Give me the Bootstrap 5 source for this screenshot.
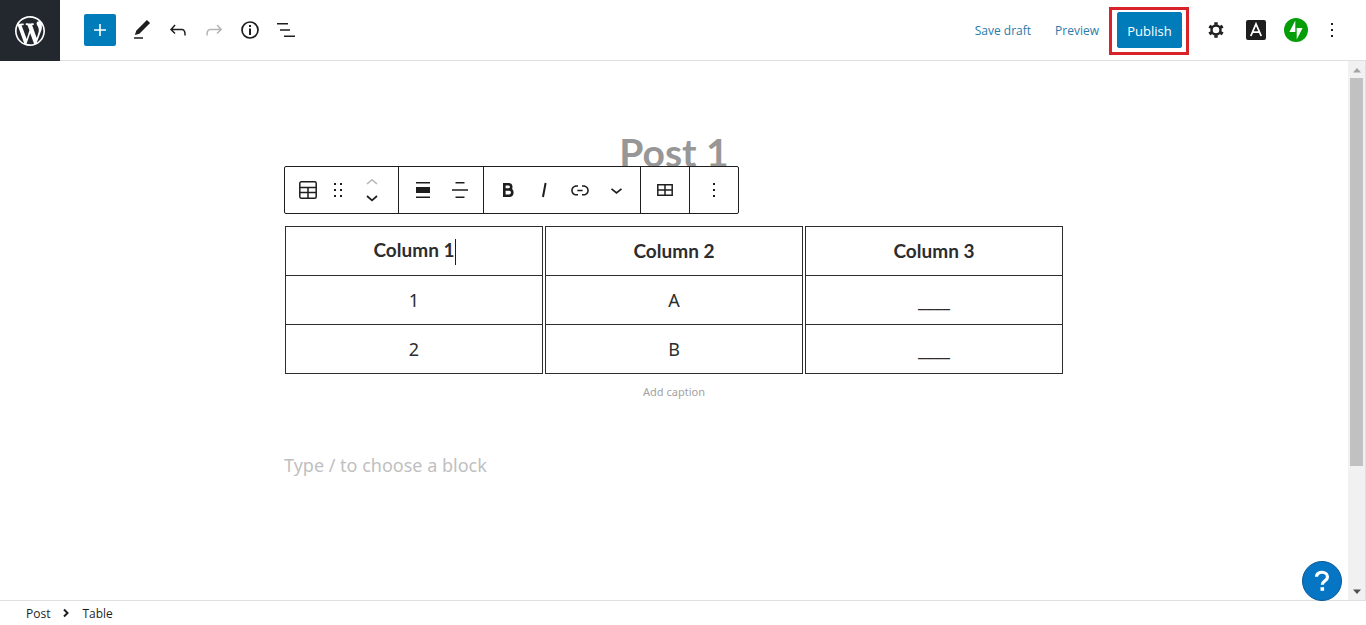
<!DOCTYPE html>
<html lang="en">
<head>
<meta charset="utf-8">
<meta name="viewport" content="width=device-width, initial-scale=1">
<title>Edit Post</title>
<link rel="stylesheet" href="https://cdn.jsdelivr.net/npm/bootstrap@5.3.0/dist/css/bootstrap.min.css">
<style>
  body { font-family: "Open Sans", "Noto Sans", sans-serif; font-size: 12px; color: #1e1e1e; }
  svg { display: block; flex: none; }
  .site-logo { width: 60px; height: 61px; margin-bottom: -1px; background: #23282e; }
  .editor-head { height: 61px; border-bottom: 1px solid #e0e0e0; }
  .icon-btn { width: 36px; height: 36px; padding: 0; border: 0; border-radius: 2px; background: none; color: #1e1e1e; display: flex; align-items: center; justify-content: center; }
  .icon-btn:disabled { color: #b5b5b5; }
  .icon-btn.slim { width: 24px; }
  .inserter { width: 32px; height: 32px; background: #007cba; color: #fff; }
  .text-link { color: #2a7ba8; text-decoration: none; padding-top: 2px; }
  .publish-frame { border: 3px solid #d9232b; padding: 2px 4px 4px 5px; margin: 2px 9px 0 10px; }
  .publish-btn { --bs-btn-bg: #007cba; --bs-btn-border-color: #007cba; --bs-btn-color: #fff; --bs-btn-font-size: 13px; --bs-btn-border-radius: 2px; width: 65px; height: 36px; padding: 3px 0 0; display: block; }
  .canvas { font-family: "Noto Sans", "Open Sans", sans-serif; font-size: 18px; color: #2c2d2e; }
  .column-wide { max-width: 782px; margin: 0 auto; padding-top: 66px; }
  .post-title { font-family: Lato, "Noto Sans", sans-serif; font-size: 39px; line-height: 50px; font-weight: 700; color: #979797; }
  .block-wrap { padding-top: 49px; }
  .block-toolbar { top: -60px; left: 1px; height: 48px; border: 1px solid #1e1e1e; border-radius: 2px; background: #fff; }
  .tool-group { display: flex; align-items: center; border-right: 1px solid #1e1e1e; padding: 0 6px; }
  .tool-group:first-child { padding-left: 5px; }
  .tool-group:last-child { border-right: 0; }
  .mover-pair { margin: 0 8px 0 10px; }
  .mover { width: 24px; height: 16px; }
  .grid-table { width: 100%; table-layout: fixed; border-collapse: separate; border-spacing: 2px 0; text-align: center; }
  .grid-table th, .grid-table td { height: 49px; padding: 0 8px; border: 1px solid #2c2d2e; border-top: 0; line-height: 26px; }
  .grid-table th { height: 50px; border-top: 1px solid #2c2d2e; font-family: Lato, "Noto Sans", sans-serif; font-size: 19px; }
  .caret { display: inline-block; width: 1px; height: 26px; margin-right: -1px; background: #1e1e1e; vertical-align: middle; }
  .plain-input { display: block; width: 100%; border: 0; padding: 0; background: none; outline: 0; }
  .plain-input::placeholder { opacity: 1; }
  .caption-input { height: 20px; margin-top: 7px; font-size: 11px; text-align: center; }
  .caption-input::placeholder { color: #a2a2a2; }
  .para-input { height: 32px; margin-top: 48px; padding-left: 1px; }
  .para-input::placeholder { color: #c0c0c0; }
  .scroll-rail { width: 18px; background: #f1f1f1; border-right: 1px solid #e0e0e0; padding: 0 2px; }
  .scroll-end { height: 17px; display: flex; align-items: center; justify-content: center; }
  .scroll-thumb { flex: 388 0 0; background: #c1c1c1; }
  .scroll-rest { flex: 117 0 0; }
  .help-btn { right: 24px; bottom: -1px; width: 40px; height: 40px; border: 1px solid #0a5a94; border-radius: 50%; background: #0675c4; color: #fff; padding: 0; display: flex; align-items: center; justify-content: center; }
  .editor-foot { height: 25px; border-top: 1px solid #e0e0e0; padding: 2px 0 0 26px; }
</style>
</head>
<body class="vh-100 d-flex flex-column overflow-hidden bg-white">

<header class="editor-head d-flex align-items-center flex-shrink-0">
  <a href="#" class="site-logo d-flex align-items-center justify-content-center align-self-start flex-shrink-0" aria-label="View posts">
    <svg width="36" height="36" viewBox="-2 -2 24 24" fill="#fff"><path d="M20 10c0-5.51-4.49-10-10-10C4.48 0 0 4.49 0 10c0 5.52 4.48 10 10 10 5.51 0 10-4.48 10-10zM7.78 15.37L4.37 6.22c.55-.02 1.17-.08 1.17-.08.5-.06.44-1.13-.06-1.11 0 0-1.45.11-2.37.11-.18 0-.37 0-.58-.01C4.12 2.69 6.87 1.11 10 1.11c2.33 0 4.45.87 6.05 2.34-.68-.11-1.65.39-1.65 1.58 0 .74.45 1.36.9 2.1.35.61.55 1.36.55 2.46 0 1.49-1.4 5-1.4 5l-3.03-8.37c.54-.02.82-.17.82-.17.5-.05.44-1.25-.06-1.22 0 0-1.44.12-2.38.12-.87 0-2.33-.12-2.33-.12-.5-.03-.56 1.2-.06 1.22l.92.08 1.26 3.41zM17.41 10c.24-.64.74-1.87.43-4.25.7 1.29 1.05 2.71 1.05 4.25 0 3.29-1.73 6.24-4.4 7.78.97-2.59 1.94-5.2 2.92-7.78zM6.1 18.09C3.12 16.65 1.11 13.53 1.11 10c0-1.3.23-2.48.72-3.59C3.25 10.3 4.67 14.2 6.1 18.09zm4.03-6.63l2.58 6.98c-.86.29-1.76.45-2.71.45-.79 0-1.57-.11-2.29-.33.81-2.38 1.62-4.74 2.42-7.1z"/></svg>
  </a>
  <div class="d-flex align-items-center ms-4">
    <button class="icon-btn inserter" aria-label="Add block"><svg width="24" height="24" viewBox="0 0 24 24" fill="currentColor"><path d="M18 11.2h-5.2V6h-1.6v5.2H6v1.6h5.2V18h1.6v-5.2H18z"/></svg></button>
    <button class="icon-btn ms-2" aria-label="Tools"><svg width="24" height="24" viewBox="0 0 24 24" fill="currentColor"><path d="M20.1 5.1L16.9 2 6.2 12.7l-1.3 4.4 4.5-1.3L20.1 5.1zM4 19.2h9v1.5H4v-1.5z"/></svg></button>
    <button class="icon-btn" aria-label="Undo"><svg width="24" height="24" viewBox="0 0 24 24" fill="currentColor"><path d="M18.3 11.7c-.6-.6-1.4-.9-2.3-.9H6.7l2.9-3.3-1.1-1-4.5 5L8.500 16l1-1-2.700-2.700H16c.5 0 .9.200 1.300.5 1 1 1 3.400 1 4.500v.3h1.500v-.2c0-1.500 0-4.300-1.500-5.700z"/></svg></button>
    <button class="icon-btn" aria-label="Redo" disabled><svg width="24" height="24" viewBox="0 0 24 24" fill="currentColor"><path d="M15.600 6.500l-1.100 1 2.900 3.300H8c-.9 0-1.700.3-2.300.9-1.400 1.500-1.400 4.200-1.400 5.600v.2h1.500v-.3c0-1.100 0-3.500 1-4.500.3-.3.700-.5 1.300-.5h9.200L14.500 15l1.100 1.100 4.600-4.600-4.600-5z"/></svg></button>
    <button class="icon-btn" aria-label="Details"><svg width="24" height="24" viewBox="0 0 24 24"><circle cx="12" cy="12" r="8" fill="none" stroke="currentColor" stroke-width="1.700"/><path d="M11 7h2v2h-2zM11 10.500h2V17h-2z" fill="currentColor"/></svg></button>
    <button class="icon-btn" aria-label="List view"><svg width="24" height="24" viewBox="0 0 24 24" fill="currentColor"><path d="M3 5h11v1.600H3zM6 11.200h10v1.600H6zM10 17.400h11V19H10z"/></svg></button>
  </div>
  <div class="d-flex align-items-center ms-auto pe-3">
    <a href="#" class="text-link me-4">Save draft</a>
    <a href="#" class="text-link">Preview</a>
    <div class="publish-frame"><button class="btn publish-btn">Publish</button></div>
    <div class="d-flex align-items-center">
      <button class="icon-btn me-1" aria-label="Settings"><svg width="24" height="24" viewBox="0 0 24 24"><circle cx="12" cy="12" r="4.500" fill="none" stroke="currentColor" stroke-width="2.400"/><g stroke="currentColor" stroke-width="3.400"><path d="M12 4.200v2.600M12 17.200v2.600M5.300 8.100l2.200 1.300M16.500 14.600l2.200 1.300M18.700 8.100l-2.200 1.300M7.500 14.600l-2.200 1.300"/></g></svg></button>
      <button class="icon-btn me-1" aria-label="Theme settings"><svg width="20" height="20" viewBox="0 0 20 20"><rect width="20" height="20" rx="2" fill="#1e1e1e"/><path d="M4.800 16 10 4l5.200 12M6.800 12.200h6.400" fill="none" stroke="#fff" stroke-width="1.800"/></svg></button>
      <button class="icon-btn" aria-label="Jetpack"><svg width="24" height="24" viewBox="0 0 24 24"><circle cx="12" cy="12" r="12" fill="#069e08"/><path d="M11.300 2.500V14H5.400zM12.700 21.500V10h5.900z" fill="#fff"/></svg></button>
      <button class="icon-btn" aria-label="Options"><svg width="24" height="24" viewBox="0 0 24 24" fill="currentColor"><path d="M11 5h2v2h-2zM11 11h2v2h-2zM11 17h2v2h-2z"/></svg></button>
    </div>
  </div>
</header>

<div class="d-flex flex-grow-1 position-relative overflow-visible">
  <main class="canvas flex-grow-1 overflow-hidden">
    <div class="column-wide">
      <h1 class="post-title text-center mb-0">Post 1</h1>
      <div class="block-wrap">
        <div class="position-relative">
        <table class="grid-table">
          <thead><tr><th scope="col">Column 1<span class="caret"></span></th><th scope="col">Column 2</th><th scope="col">Column 3</th></tr></thead>
          <tbody>
            <tr><td>1</td><td>A</td><td>____</td></tr>
            <tr><td>2</td><td>B</td><td>____</td></tr>
          </tbody>
        </table>
        <div class="block-toolbar position-absolute d-flex" role="toolbar" aria-label="Block tools">
          <div class="tool-group">
            <button class="icon-btn" aria-label="Table"><svg width="24" height="24" viewBox="0 0 24 24" fill="none" stroke="currentColor" stroke-width="1.500"><rect x="3.800" y="3.800" width="16.400" height="16.400" rx="1.500"/><path d="M4 9.500h16M4 14.500h16M12 9.500V20"/></svg></button>
            <button class="icon-btn slim" aria-label="Drag"><svg width="24" height="24" viewBox="0 0 24 24" fill="currentColor"><path d="M8 5h2v2H8zM14 5h2v2h-2zM8 11h2v2H8zM14 11h2v2h-2zM8 17h2v2H8zM14 17h2v2h-2z"/></svg></button>
            <div class="mover-pair d-flex flex-column">
              <button class="icon-btn mover" aria-label="Move up" disabled><svg width="16" height="16" viewBox="0 0 16 16" fill="none" stroke="currentColor" stroke-width="1.500"><path d="M3 10l5-4.300L13 10"/></svg></button>
              <button class="icon-btn mover" aria-label="Move down"><svg width="16" height="16" viewBox="0 0 16 16" fill="none" stroke="currentColor" stroke-width="1.700"><path d="M3 6l5 4.300L13 6"/></svg></button>
            </div>
          </div>
          <div class="tool-group">
            <button class="icon-btn" aria-label="Align"><svg width="24" height="24" viewBox="0 0 24 24" fill="currentColor"><path d="M5 4h14v1.600H5zM5 9h14v6H5zM5 18.400h14V20H5z"/></svg></button>
            <button class="icon-btn" aria-label="Column alignment"><svg width="24" height="24" viewBox="0 0 24 24" fill="currentColor"><path d="M8.500 4h9v1.600h-9zM5 11.200h16v1.600H5zM8.500 18.400h9V20h-9z"/></svg></button>
          </div>
          <div class="tool-group">
            <button class="icon-btn" aria-label="Bold"><svg width="24" height="24" viewBox="0 0 24 24" fill="none" stroke="currentColor" stroke-width="2.600"><path d="M8.300 6.300h4.200c3.600 0 3.600 5.200 0 5.200H8.300zM8.300 11.500h5c4 0 4 6.200 0 6.200h-5z"/></svg></button>
            <button class="icon-btn" aria-label="Italic"><svg width="24" height="24" viewBox="0 0 24 24"><path d="M13.600 5l-2.600 14" stroke="currentColor" stroke-width="2"/></svg></button>
            <button class="icon-btn" aria-label="Link"><svg width="24" height="24" viewBox="0 0 24 24" fill="currentColor"><path d="M15.600 7.200H14v1.500h1.600c2 0 3.700 1.700 3.700 3.700s-1.700 3.700-3.700 3.700H14v1.500h1.600c2.800 0 5.200-2.300 5.200-5.200 0-2.900-2.300-5.200-5.200-5.200zM4.700 12.400c0-2 1.700-3.700 3.700-3.700H10V7.200H8.400c-2.900 0-5.200 2.300-5.200 5.200 0 2.900 2.300 5.200 5.200 5.200H10v-1.500H8.400c-2 0-3.700-1.700-3.700-3.700zm4.600.9h5.300v-1.500H9.300v1.500z"/></svg></button>
            <button class="icon-btn" aria-label="More rich text"><svg width="24" height="24" viewBox="0 0 24 24" fill="none" stroke="currentColor" stroke-width="1.700"><path d="M7.500 10.800l5 4.200 5-4.200"/></svg></button>
          </div>
          <div class="tool-group">
            <button class="icon-btn" aria-label="Edit table"><svg width="24" height="24" viewBox="0 0 24 24" fill="none" stroke="currentColor" stroke-width="1.500"><path d="M4.800 6.800h14.400v10.400H4.800zM12 7v10M5 12h14"/></svg></button>
          </div>
          <div class="tool-group">
            <button class="icon-btn" aria-label="Options"><svg width="24" height="24" viewBox="0 0 24 24" fill="currentColor"><path d="M11 5h2v2h-2zM11 11h2v2h-2zM11 17h2v2h-2z"/></svg></button>
          </div>
        </div>
        </div>
        <input class="plain-input caption-input" type="text" placeholder="Add caption" aria-label="Table caption">
        <input class="plain-input para-input" type="text" placeholder="Type / to choose a block" aria-label="Empty block">
      </div>
    </div>
  </main>
  <div class="scroll-rail d-flex flex-column flex-shrink-0" aria-hidden="true">
    <div class="scroll-end"><svg width="8" height="6" viewBox="0 0 8 6"><path d="M0 5.500 4 1l4 4.500z" fill="#a3a3a3"/></svg></div>
    <div class="scroll-thumb"></div>
    <div class="scroll-rest"></div>
    <div class="scroll-end"><svg width="8" height="6" viewBox="0 0 8 6"><path d="M0 .5 4 5l4-4.500z" fill="#505050"/></svg></div>
  </div>
  <button class="help-btn position-absolute" aria-label="Help"><svg width="24" height="24" viewBox="0 0 24 24"><path d="M6.500 7.700C6.500 1.700 17.500 1.700 17.500 8c0 3.800-5.200 3.700-5.200 7.800" fill="none" stroke="#fff" stroke-width="3.200"/><path d="M10.500 18.200h3.600v3.600h-3.600z" fill="#fff"/></svg></button>
</div>

<footer class="editor-foot d-flex align-items-center flex-shrink-0">
  <nav class="d-flex align-items-center gap-2" aria-label="Block breadcrumb">
    <span>Post</span>
    <svg width="16" height="16" viewBox="0 0 16 16" fill="none" stroke="#1e1e1e" stroke-width="2"><path d="M6 3.500 9.500 7 6 10.500"/></svg>
    <span>Table</span>
  </nav>
</footer>

<script src="https://cdn.jsdelivr.net/npm/bootstrap@5.3.0/dist/js/bootstrap.bundle.min.js"></script>
</body>
</html>
